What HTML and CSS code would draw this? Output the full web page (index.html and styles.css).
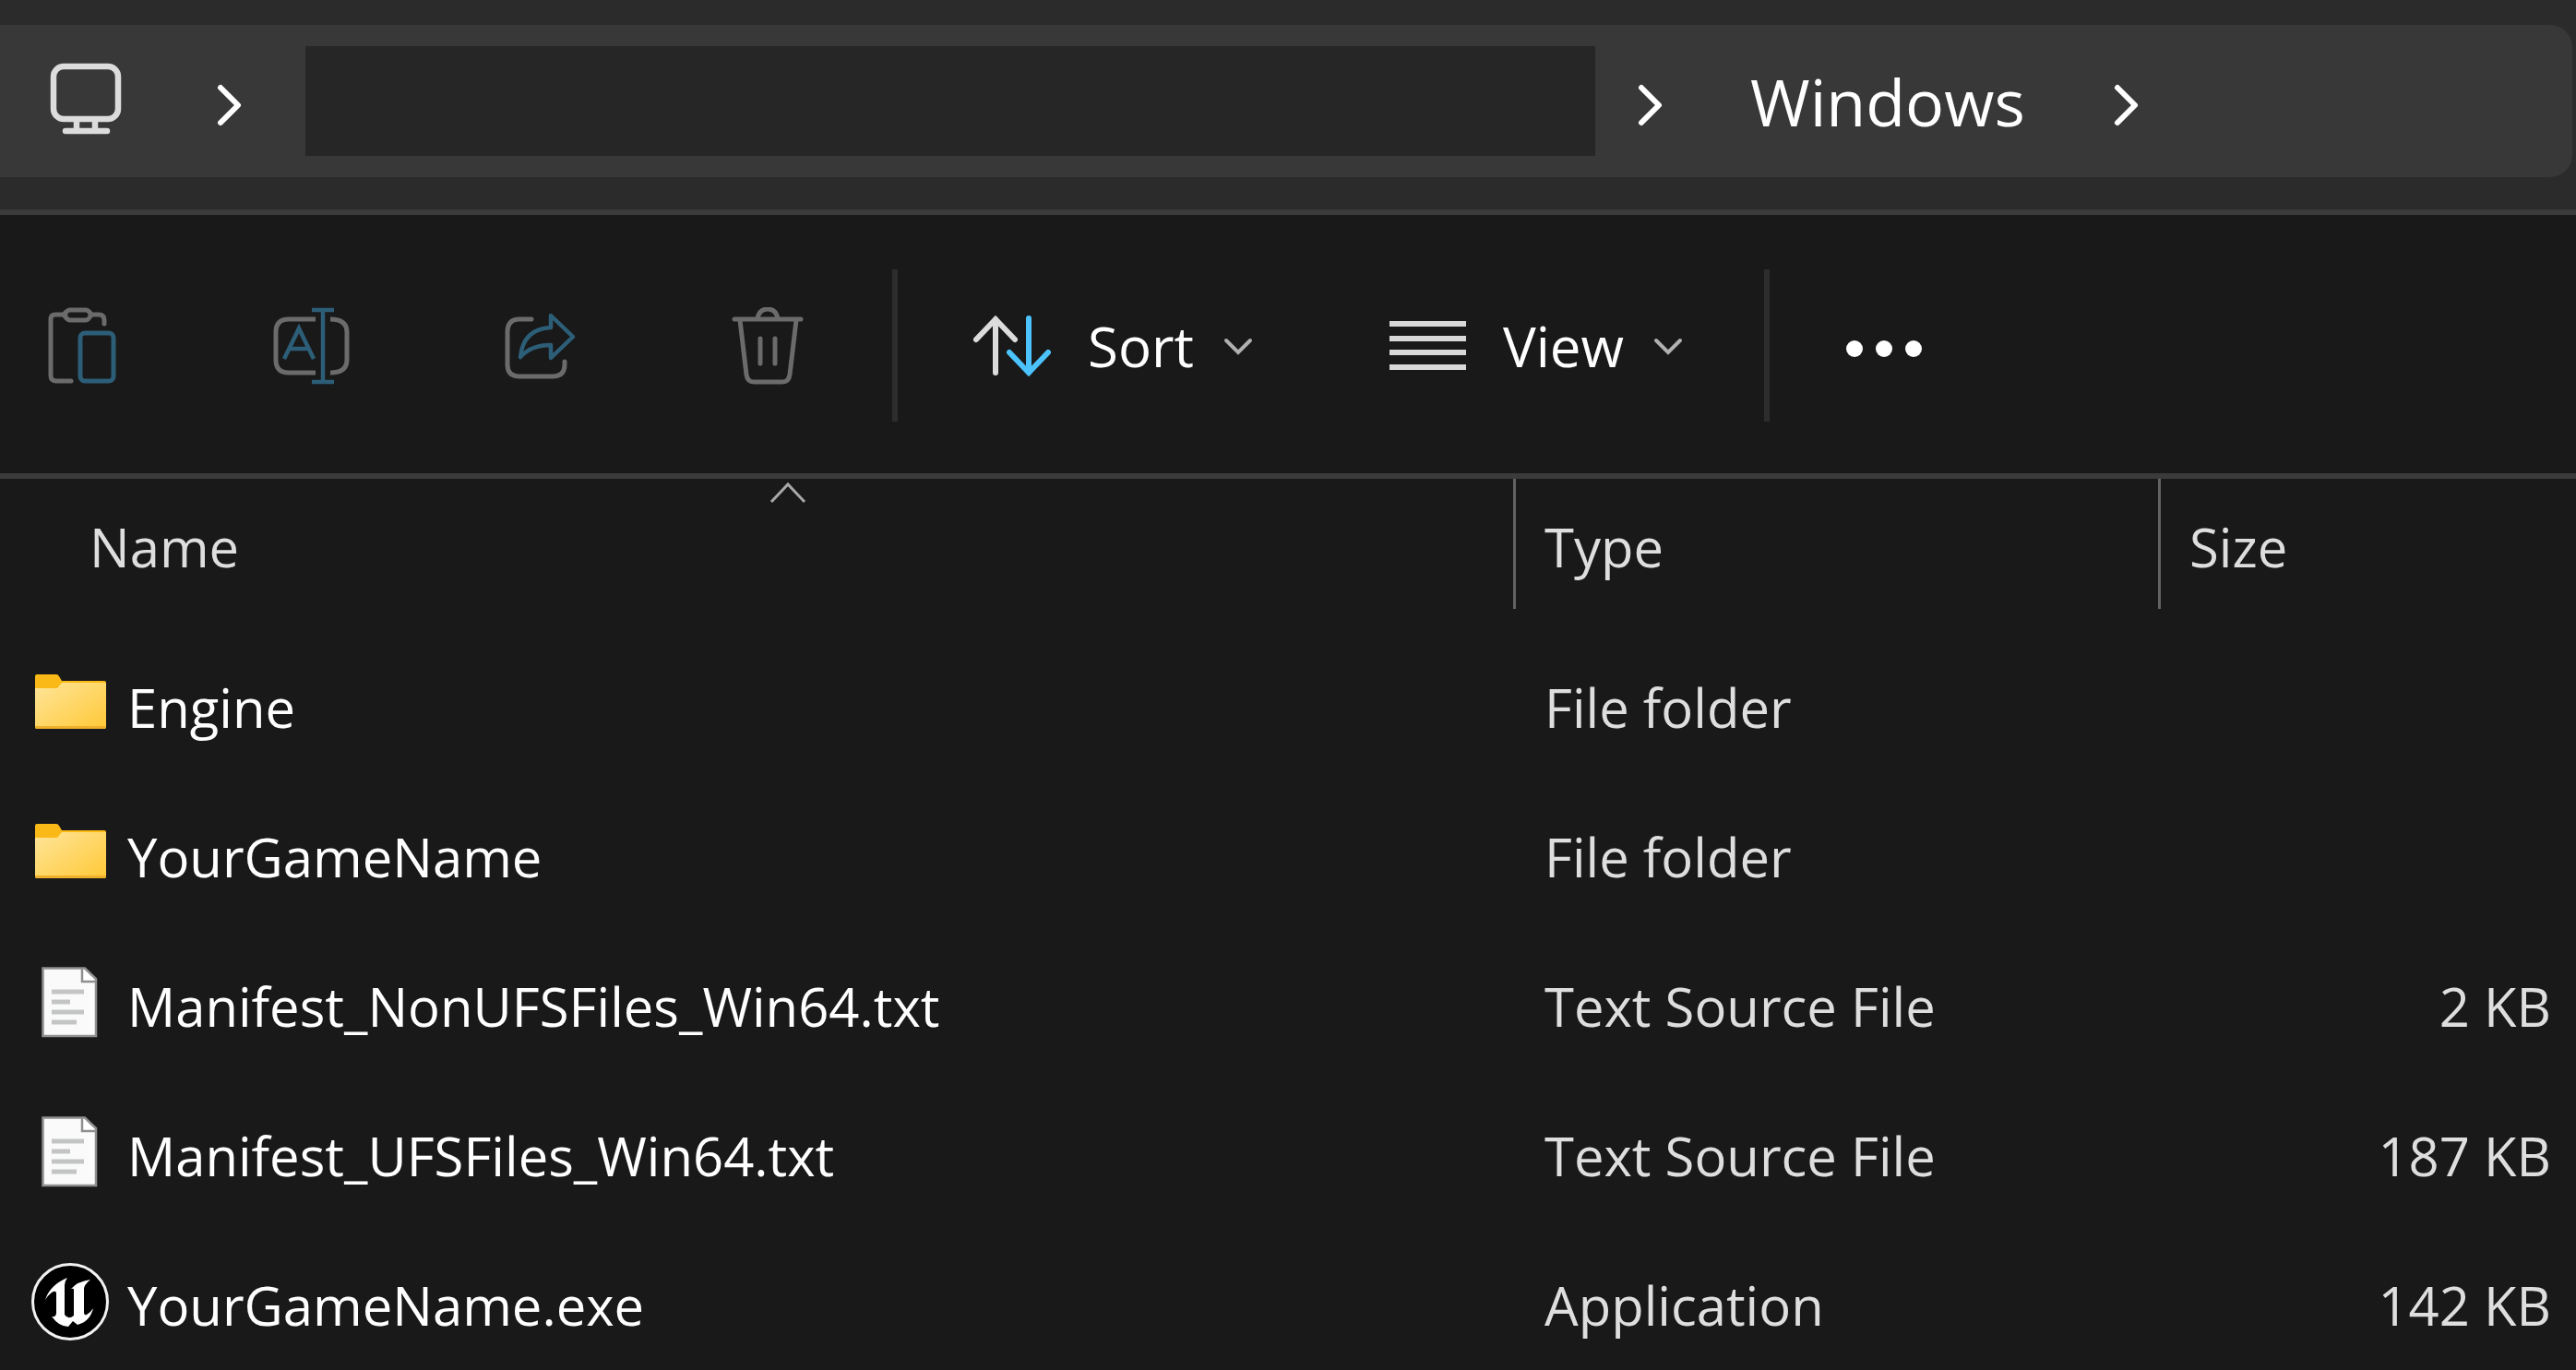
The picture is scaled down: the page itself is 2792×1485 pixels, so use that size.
FILE: index.html
```html
<!DOCTYPE html>
<html lang="en">
<head>
<meta charset="utf-8">
<title>Windows</title>
<link rel="stylesheet" href="styles.css">
</head>
<body>
<svg class="defs" aria-hidden="true">
  <defs>
    <linearGradient id="folder-front" x1="0" y1="0" x2="1" y2="1">
      <stop offset="0" stop-color="#ffe59a"/>
      <stop offset="1" stop-color="#ffc937"/>
    </linearGradient>
    <symbol id="folder" viewBox="0 0 84 84">
      <path d="M4 12q0-2 2-2h21q2 0 3 2l3 5h46q2 0 2 2v48H4z" fill="#fbb917"/>
      <path d="M4 25h24l5-6h48v48q0 2-2 2H6q-2 0-2-2z" fill="url(#folder-front)"/>
      <path d="M4 66h77v1q0 2-2 2H6q-2 0-2-2z" fill="#efb02b"/>
    </symbol>
    <symbol id="document" viewBox="0 0 84 84">
      <path d="M12.500 4.500H58L70 16v62H12.500z" fill="#fafafa" stroke="#8f8f8f" stroke-width="2.500"/>
      <path d="M55 4.500V19h15" fill="#fff" stroke="#8f8f8f" stroke-width="2.500"/>
      <path d="M22 30h35M22 41h20M22 52h35M22 63h27" stroke="#c3c5c5" stroke-width="5"/>
    </symbol>
    <symbol id="unreal" viewBox="0 0 84 84">
      <circle cx="42" cy="42" r="40.500" fill="#000" stroke="#f2f2f2" stroke-width="3"/>
      <path d="M15 40Q20 24 39 16Q36 20 36 24V56Q40 62 46 57V29Q46 27 43 28Q50 20 64 18Q57 24 57 28V54Q57 57 60 56Q64 54 67 49Q64 63 50 67L45 63L40 69Q30 69 22 58Q27 59 27 54V33Q27 29 22 32Q18 35 15 40z" fill="#fff"/>
    </symbol>
    <symbol id="chevron-right" viewBox="0 0 32 48">
      <path d="M6 5l19 19L6 43" fill="none" stroke="#fff" stroke-width="6" stroke-linecap="round" stroke-linejoin="round"/>
    </symbol>
    <symbol id="chevron-down" viewBox="0 0 34 24">
      <path d="M3 6l13 13L29 6" fill="none" stroke="#b0b0b0" stroke-width="4" stroke-linecap="round"/>
    </symbol>
  </defs>
</svg>

<header class="location">
  <nav class="address" aria-label="Address">
    <svg class="monitor" viewBox="0 0 84 84" aria-hidden="true">
      <g fill="none" stroke="#dcdcdc" stroke-width="6.500" stroke-linecap="round">
        <rect x="8" y="4" width="70" height="57" rx="11"/>
        <path d="M33 62v10M53 62v10M21 74h45"/>
      </g>
    </svg>
    <svg class="step" aria-hidden="true"><use href="#chevron-right"/></svg>
    <div class="hidden-path"></div>
    <svg class="step" aria-hidden="true"><use href="#chevron-right"/></svg>
    <a class="crumb" href="#">Windows</a>
    <svg class="step" aria-hidden="true"><use href="#chevron-right"/></svg>
  </nav>
</header>

<div class="toolbar" role="toolbar">
  <div class="actions">
    <button class="tool" disabled aria-label="Paste">
      <svg class="icon" viewBox="0 0 84 84" fill="none" stroke="#6b6b6b" stroke-width="5" stroke-linecap="round" stroke-linejoin="round">
        <path d="M24 8H13q-5 0-5 5v61q0 6 6 6h16M51 8h9q6 0 6 6v4"/>
        <path d="M29 3h17q3 0 6 5-3 6-6 6H29q-3 0-7-6 4-5 7-5z"/>
        <rect x="40" y="28" width="36" height="52" rx="5" stroke="#2d5e78"/>
      </svg>
    </button>
    <button class="tool" disabled aria-label="Rename">
      <svg class="icon" viewBox="0 0 84 84" fill="none" stroke="#6b6b6b" stroke-width="5">
        <path d="M47 13H18Q4 13 4 27v30q0 14 14 14h29M63 13q18 0 18 14v30q0 14-18 14"/>
        <path d="M43 3h24M43 81h24M55 3v78M13 56l16-33 16 33M19 45h21" stroke="#2d5e78" stroke-width="4.500"/>
      </svg>
    </button>
    <button class="tool" disabled aria-label="Share">
      <svg class="icon" viewBox="0 0 84 84" fill="none" stroke="#6b6b6b" stroke-width="5" stroke-linecap="round">
        <path d="M33 13H20Q7 13 7 27v35q0 13 13 13h36q13 0 13-13v-3"/>
        <path d="M21 54c2-20 13-31 33-32V9l24 23-24 23V41c-15 0-25 4-33 13z" stroke="#2d5e78" stroke-linejoin="round" stroke-width="4.500"/>
      </svg>
    </button>
    <button class="tool" disabled aria-label="Delete">
      <svg class="icon" viewBox="0 0 84 84" fill="none" stroke="#6b6b6b" stroke-width="5" stroke-linecap="round">
        <path d="M5 13h72M30 12q2-10 11-10t11 10M11 14l7 59q1 8 8 8h31q7 0 8-8l7-59M33 34v27M49 34v27"/>
      </svg>
    </button>
  </div>
  <div class="divider"></div>
  <button class="tool menu">
    <svg class="icon" viewBox="0 0 84 84" fill="none" stroke-width="6" stroke-linecap="round" aria-hidden="true">
      <path d="M24 71V13M3 35l21-22 21 22" stroke="#dcdcdc"/>
      <path d="M60 12v59M39 49l21 22 21-22" stroke="#4cc2ff"/>
    </svg>
    <span class="label">Sort</span>
    <svg class="caret" aria-hidden="true"><use href="#chevron-down"/></svg>
  </button>
  <button class="tool menu view">
    <svg class="icon" viewBox="0 0 84 84" fill="none" stroke="#d8d8d8" stroke-width="6" aria-hidden="true">
      <path d="M1 18h83M1 34h83M1 49h83M1 65h83"/>
    </svg>
    <span class="label">View</span>
    <svg class="caret" aria-hidden="true"><use href="#chevron-down"/></svg>
  </button>
  <div class="divider"></div>
  <button class="tool" aria-label="See more">
    <svg class="icon" viewBox="0 0 84 84" fill="#fff">
      <circle cx="10" cy="45" r="9"/><circle cx="42" cy="45" r="9"/><circle cx="74" cy="45" r="9"/>
    </svg>
  </button>
</div>

<main>
  <table class="files">
    <colgroup><col><col class="col-type"><col class="col-size"></colgroup>
    <thead>
      <tr>
        <th scope="col" aria-sort="ascending">
          <button class="head first">Name
            <svg class="sorted" viewBox="0 0 44 28" aria-hidden="true"><path d="M4 25L22 6l18 19" fill="none" stroke="#a8a8a8" stroke-width="3"/></svg>
          </button>
        </th>
        <th scope="col"><button class="head">Type</button></th>
        <th scope="col"><button class="head">Size</button></th>
      </tr>
    </thead>
    <tbody>
      <tr>
        <td><div class="name"><svg class="file" aria-hidden="true"><use href="#folder"/></svg>Engine</div></td>
        <td class="type">File folder</td>
        <td class="size"></td>
      </tr>
      <tr>
        <td><div class="name"><svg class="file" aria-hidden="true"><use href="#folder"/></svg>YourGameName</div></td>
        <td class="type">File folder</td>
        <td class="size"></td>
      </tr>
      <tr>
        <td><div class="name"><svg class="file" aria-hidden="true"><use href="#document"/></svg>Manifest_NonUFSFiles_Win64.txt</div></td>
        <td class="type">Text Source File</td>
        <td class="size">2 KB</td>
      </tr>
      <tr>
        <td><div class="name"><svg class="file" aria-hidden="true"><use href="#document"/></svg>Manifest_UFSFiles_Win64.txt</div></td>
        <td class="type">Text Source File</td>
        <td class="size">187 KB</td>
      </tr>
      <tr>
        <td><div class="name"><svg class="file" aria-hidden="true"><use href="#unreal"/></svg>YourGameName.exe</div></td>
        <td class="type">Application</td>
        <td class="size">142 KB</td>
      </tr>
    </tbody>
  </table>
</main>
</body>
</html>
```
FILE: styles.css
```css
* {
  box-sizing: border-box;
}

body {
  margin: 0;
  height: 100vh;
  overflow: hidden;
  background: #191919;
  color: #fff;
  font-family: "Open Sans", "Noto Sans", sans-serif;
  font-size: 60px;
  line-height: 84px;
}

button {
  margin: 0;
  padding: 0;
  border: 0;
  background: none;
  color: inherit;
  font: inherit;
}

svg {
  display: block;
  flex: none;
}

.defs {
  position: absolute;
  width: 0;
  height: 0;
}

.location {
  padding: 27px 4px 35px 0;
  background: #2b2b2b;
  border-bottom: 6px solid #3b3b3b;
}

.address {
  display: flex;
  align-items: center;
  height: 165px;
  padding-left: 50px;
  background: #383838;
  border-radius: 0 24px 24px 0;
}

.monitor {
  width: 84px;
  height: 84px;
  margin-right: 99px;
}

.step {
  width: 32px;
  height: 48px;
  margin-top: 8px;
}

.hidden-path {
  flex: 0 1 1398px;
  height: 119px;
  margin: 0 44px 0 66px;
  background: #262626;
}

.crumb {
  margin: 0 94px 0 92px;
  color: #fff;
  font-size: 70px;
  text-decoration: none;
}

.toolbar {
  display: flex;
  align-items: center;
  height: 286px;
  padding: 3px 0 0 47px;
  border-bottom: 6px solid #3b3b3b;
}

.actions {
  display: flex;
  gap: 164px;
}

.tool {
  display: flex;
  align-items: center;
}

.icon {
  width: 84px;
  height: 84px;
}

.divider {
  width: 6px;
  height: 165px;
  margin: 0 82px 0 92px;
  background: #2d2d2d;
}

.menu {
  gap: 32px;
}

.label {
  padding-left: 8px;
}

.view {
  margin-left: 145px;
}

.view + .divider {
  margin-left: 86px;
}

.caret {
  width: 34px;
  height: 24px;
}

.files {
  width: 100%;
  table-layout: fixed;
  border-collapse: collapse;
  font-size: 58px;
}

.col-type {
  width: 699px;
}

.col-size {
  width: 453px;
}

th {
  padding: 0 0 26px;
  font-weight: 400;
}

.head {
  position: relative;
  display: block;
  width: 100%;
  height: 141px;
  padding: 6px 0 0 31px;
  border-left: 3px solid #636363;
  color: #dedede;
  text-align: left;
}

.first {
  width: auto;
  min-width: calc(100% - 66px);
  margin-left: 66px;
  border-left: 0;
}

.sorted {
  position: absolute;
  top: 0;
  left: calc(50% - 21px);
  width: 44px;
  height: 28px;
}

td {
  height: 162px;
  padding: 0;
  vertical-align: middle;
}

.name {
  display: flex;
  align-items: center;
  gap: 20px;
  padding-left: 34px;
  white-space: nowrap;
}

.file {
  width: 84px;
  height: 84px;
  margin-bottom: 8px;
}

.type {
  padding-left: 34px;
  color: #dedede;
}

.size {
  padding-right: 27px;
  color: #dedede;
  text-align: right;
}
```
